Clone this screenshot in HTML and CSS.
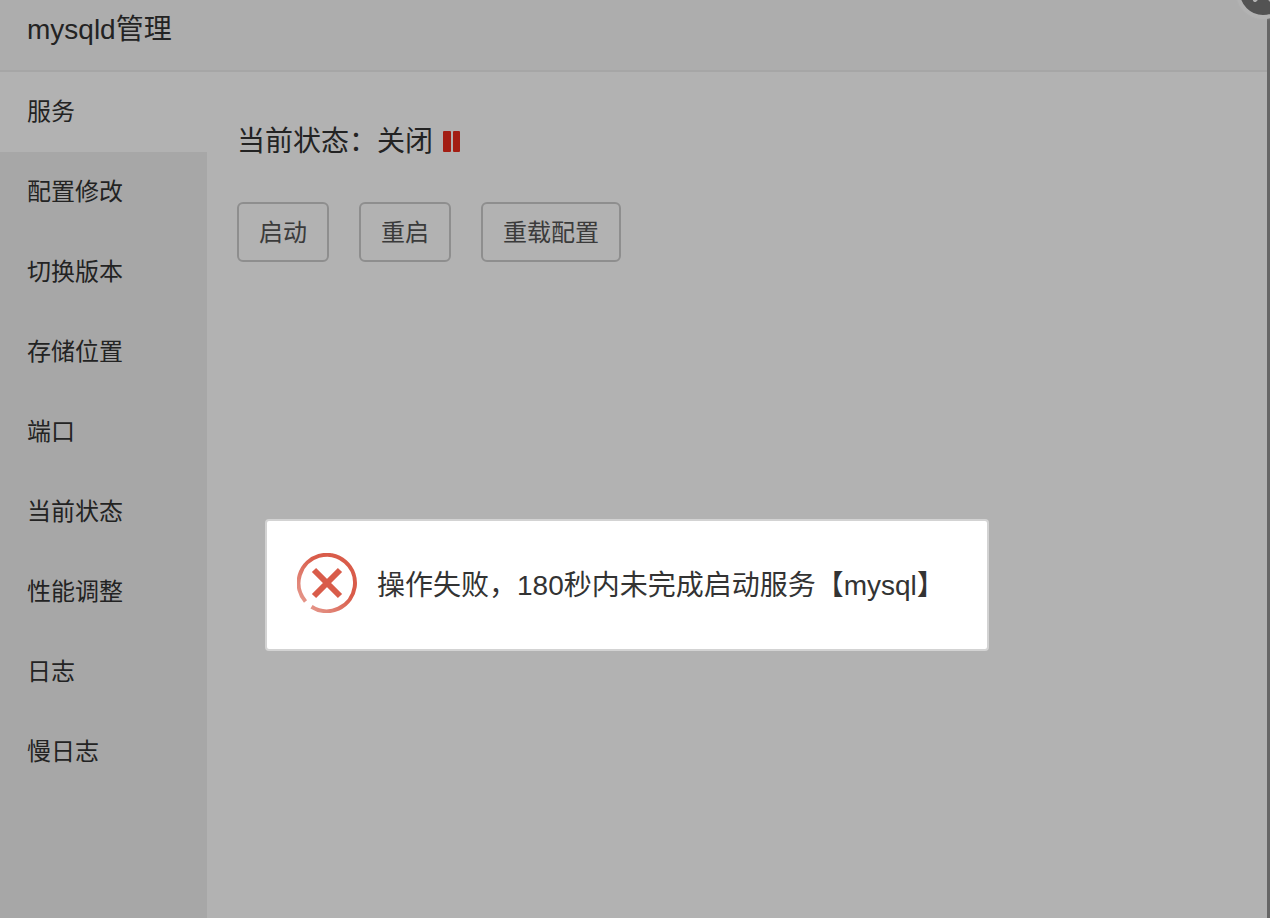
FILE: index.html
```html
<!DOCTYPE html>
<html lang="zh-CN">
<head>
  <meta charset="UTF-8">
  <meta name="viewport" content="width=device-width, initial-scale=1.0">
  <title>mysqld管理</title>
  <link rel="stylesheet" href="styles.css">
</head>
<body>
  <div class="panel">
    <header class="panel-title">
      <h1>mysqld管理</h1>
    </header>
    <div class="panel-body">
      <nav class="menu">
        <a class="menu-item active" href="#service">服务</a>
        <a class="menu-item" href="#config">配置修改</a>
        <a class="menu-item" href="#version">切换版本</a>
        <a class="menu-item" href="#storage">存储位置</a>
        <a class="menu-item" href="#port">端口</a>
        <a class="menu-item" href="#status">当前状态</a>
        <a class="menu-item" href="#tuning">性能调整</a>
        <a class="menu-item" href="#log">日志</a>
        <a class="menu-item" href="#slow-log">慢日志</a>
      </nav>
      <main class="content">
        <p class="status">
          <span>当前状态：关闭</span>
          <svg class="pause-icon" width="18" height="22" viewBox="0 0 18 22" aria-hidden="true">
            <rect x="0" y="0" width="8" height="21" rx="1"/>
            <rect x="10" y="0" width="7" height="21" rx="1"/>
          </svg>
        </p>
        <div class="actions">
          <button class="btn" type="button">启动</button>
          <button class="btn" type="button">重启</button>
          <button class="btn" type="button">重载配置</button>
        </div>
      </main>
    </div>
    <button class="close" type="button" aria-label="关闭">
      <svg width="46" height="46" viewBox="0 0 46 46" aria-hidden="true">
        <path d="M15 15l16 16M31 15L15 31"/>
      </svg>
    </button>
  </div>

  <div class="shade"></div>

  <div class="message" role="alertdialog" aria-labelledby="message-text">
    <svg class="error-icon" width="60" height="60" viewBox="0 0 60 60" aria-hidden="true">
      <defs>
        <linearGradient id="ring-fade" x1="0" y1="1" x2="1" y2="0">
          <stop offset="0.1" stop-color="#e5988c"/>
          <stop offset="0.6" stop-color="#d95c4a"/>
        </linearGradient>
      </defs>
      <path class="ring" stroke="url(#ring-fade)" d="M14.500 53.700A28.200 28.200 0 1 0 8.500 48.500"/>
      <path class="cross" d="M17 17l26 26M43 17L17 43"/>
    </svg>
    <p id="message-text">操作失败，180秒内未完成启动服务【mysql】</p>
  </div>
</body>
</html>
```

FILE: styles.css
```css
* {
  box-sizing: border-box;
}
body {
  margin: 0;
  min-height: 100vh;
  padding-right: 3px;
  display: flex;
  overflow: hidden;
  background: #929292;
  color: #333;
  font-family: "Liberation Sans", "Noto Sans CJK SC", sans-serif;
}
h1,
p {
  margin: 0;
  font-size: 28px;
  font-weight: normal;
  line-height: 40px;
}
.panel {
  position: relative;
  flex: 1;
  display: flex;
  flex-direction: column;
  background: #fff;
}
.panel-title {
  padding: 10px 27px 20px;
  background: #f8f8f8;
  border-bottom: 2px solid #eee;
}
.panel-body {
  flex: 1;
  display: flex;
}
.menu {
  width: 207px;
  background: #f0f0f0;
}
.menu-item {
  display: block;
  padding-left: 27px;
  font-size: 24px;
  line-height: 80px;
  color: #333;
  text-decoration: none;
}
.menu-item.active {
  background: #fff;
}
.content {
  flex: 1;
  padding: 50px 30px;
}
.status {
  display: flex;
  align-items: center;
  gap: 10px;
  margin-bottom: 40px;
}
.pause-icon {
  fill: #ea2b1e;
}
.actions {
  display: flex;
  gap: 30px;
}
.btn {
  height: 60px;
  padding: 0 20px 4px;
  border: 2px solid #ccc;
  border-radius: 6px;
  background: #fff;
  color: #555;
  font-family: inherit;
  font-size: 24px;
  cursor: pointer;
}

/* close button hangs over the top right corner */
.close {
  position: absolute;
  top: -35px;
  right: -23px;
  width: 54px;
  height: 54px;
  padding: 0;
  border: 4px solid #fff;
  border-radius: 50%;
  background: #777;
  box-shadow: 0 0 3px rgba(255, 255, 255, 0.6);
  cursor: pointer;
}
.close svg {
  display: block;
  fill: none;
  stroke: #fff;
  stroke-width: 4;
  stroke-linecap: round;
}

.shade {
  position: fixed;
  inset: 0;
  background: rgba(0, 0, 0, 0.3);
}
.message {
  position: absolute;
  top: 519px;
  left: 265px;
  display: flex;
  gap: 20px;
  padding: 32px 42px 36px 30px;
  background: #fff;
  border: 2px solid #d3d3d3;
  border-radius: 4px;
}
.message p {
  padding-top: 13px;
  white-space: nowrap;
}
.error-icon {
  fill: none;
}
.error-icon .ring {
  stroke-width: 4;
}
.error-icon .cross {
  stroke: #d95c4a;
  stroke-width: 6;
}
```
